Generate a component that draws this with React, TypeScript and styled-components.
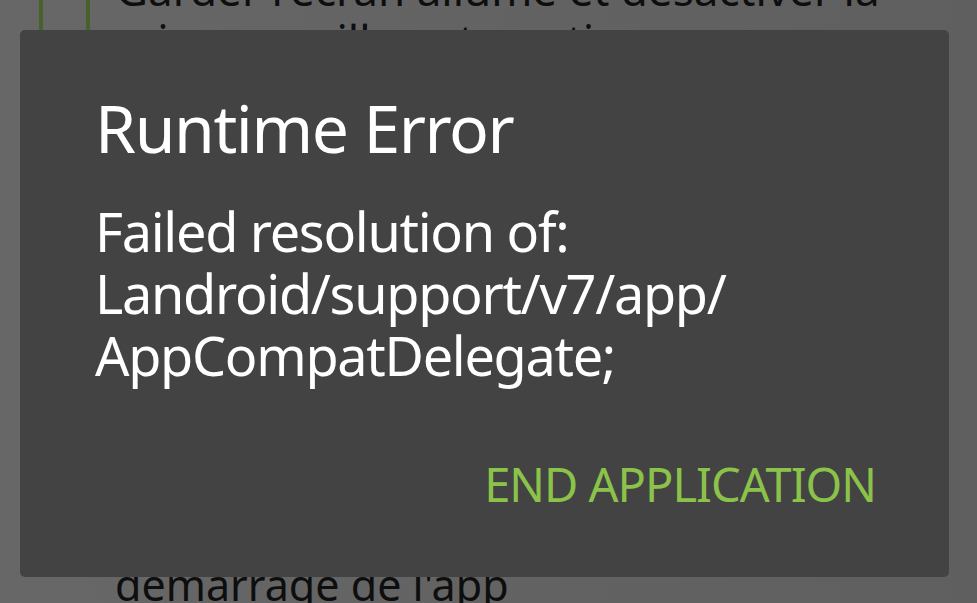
import React from 'react'
import styled, { createGlobalStyle } from 'styled-components'

const GlobalStyle = createGlobalStyle`
  html, body {
    margin: 0;
    padding: 0;
    width: 977px;
    height: 603px;
    overflow: hidden;
    background: #636363;
    font-family: 'Noto Sans', 'Open Sans', sans-serif;
  }
`

const Screen = styled.div`
  position: relative;
  width: 977px;
  height: 603px;
  overflow: hidden;
  background: linear-gradient(90deg, #676767 0%, #626262 60%, #5f5f5f 100%);
`

const Settings = styled.div`
  display: flex;
  flex-direction: column;
  justify-content: space-between;
  height: 100%;
`

const OptionRow = styled.div`
  display: flex;
  align-items: flex-start;
  gap: 26px;
  padding-left: 39px;
  margin-top: -36px;
`

const CheckboxFrame = styled.div`
  width: 43px;
  height: 110px;
  border-left: 4px solid #46612a;
  border-right: 4px solid #46612a;
  flex-shrink: 0;
`

const OptionText = styled.div`
  font-size: 44px;
  line-height: 51px;
  color: #0e0e0e;
`

const TrailingText = styled.div`
  padding-left: 115px;
  font-size: 43px;
  line-height: 51px;
  color: #0e0e0e;
  margin-bottom: -7px;
`

const Scrim = styled.div`
  position: absolute;
  inset: 0;
  display: flex;
  padding: 30px 28px 26px 20px;
`

const Dialog = styled.div`
  flex: 1;
  display: flex;
  flex-direction: column;
  background: #434343;
  border-radius: 5px;
  padding: 0 73px 0 75px;
  color: #ffffff;
`

const Title = styled.h1`
  margin: 57px 0 0;
  font-weight: 400;
  font-size: 66px;
  line-height: 80px;
  letter-spacing: -1.4px;
`

const Message = styled.p`
  margin: 33px 0 0;
  font-size: 54px;
  line-height: 62px;
  letter-spacing: -1.3px;
`

const Actions = styled.div`
  display: flex;
  justify-content: flex-end;
  margin-top: 68px;
`

const ActionButton = styled.button`
  background: none;
  border: none;
  padding: 0;
  font-family: inherit;
  font-size: 47px;
  line-height: 60px;
  letter-spacing: -1px;
  color: #8bc34a;
  text-transform: uppercase;
`

export default function App() {
  return (
    <>
      <GlobalStyle />
      <Screen>
        <Settings>
          <OptionRow>
            <CheckboxFrame />
            <OptionText>
              Garder l'écran allumé et désactiver la
              <br />
              mise en veille automatique
            </OptionText>
          </OptionRow>
          <TrailingText>démarrage de l'app</TrailingText>
        </Settings>
        <Scrim>
          <Dialog>
            <Title>Runtime Error</Title>
            <Message>
              Failed resolution of:
              <br />
              Landroid/support/v7/app/
              <br />
              AppCompatDelegate;
            </Message>
            <Actions>
              <ActionButton>End application</ActionButton>
            </Actions>
          </Dialog>
        </Scrim>
      </Screen>
    </>
  )
}
